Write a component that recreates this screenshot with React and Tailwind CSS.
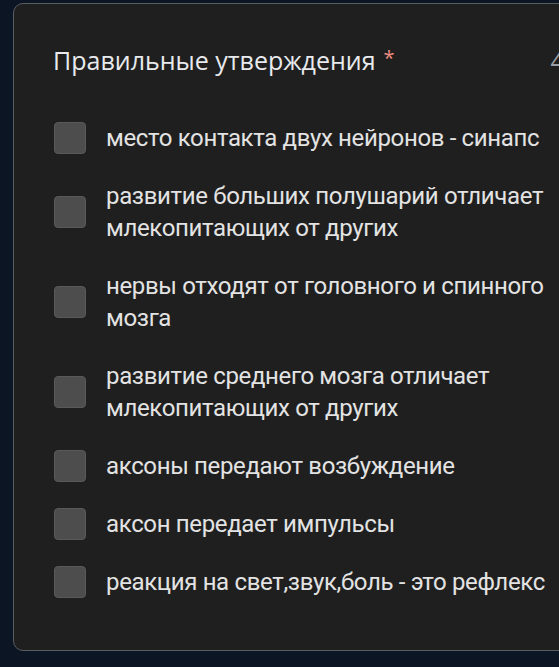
import React from "react";

const items = [
  "место контакта двух нейронов - синапс",
  "развитие больших полушарий отличает млекопитающих от других",
  "нервы отходят от головного и спинного мозга",
  "развитие среднего мозга отличает млекопитающих от других",
  "аксоны передают возбуждение",
  "аксон передает импульсы",
  "реакция на свет,звук,боль - это рефлекс",
];

export default function App() {
  return (
    <div className="w-[559px] h-[667px] overflow-hidden bg-[#0c1524] pt-[3px] pl-[13px]">
      <div className="w-[620px] h-[648px] rounded-[10px] border border-[#585d63] bg-[#1f1f1f] pt-[36px] pl-[39px]">
        <div className="flex items-start h-[40px] whitespace-nowrap" style={{ fontFamily: '"Open Sans", sans-serif' }}>
          <span className="text-[25px] leading-[40px] text-[#e8eaed]">Правильные утверждения</span>
          <span className="text-[20px] leading-[36px] text-[#f28b82] ml-[8px]">*</span>
          <span className="ml-[156px] text-[25px] leading-[40px] text-[#9aa0a6]">4 балла</span>
        </div>
        <div className="mt-[42px] flex flex-col gap-[26px]" style={{ fontFamily: 'Roboto, sans-serif' }}>
          {items.map((t, i) => (
            <div key={i} className="flex items-center">
              <div className="w-[32px] h-[32px] shrink-0 rounded-[4px] bg-[#4d4d4d] border border-[#5a5a5a] ml-[1px]" />
              <div className="ml-[20px] w-[450px] text-[24px] tracking-[-0.35px] leading-[32px] text-[#e3e3e3]">{t}</div>
            </div>
          ))}
        </div>
      </div>
    </div>
  );
}
